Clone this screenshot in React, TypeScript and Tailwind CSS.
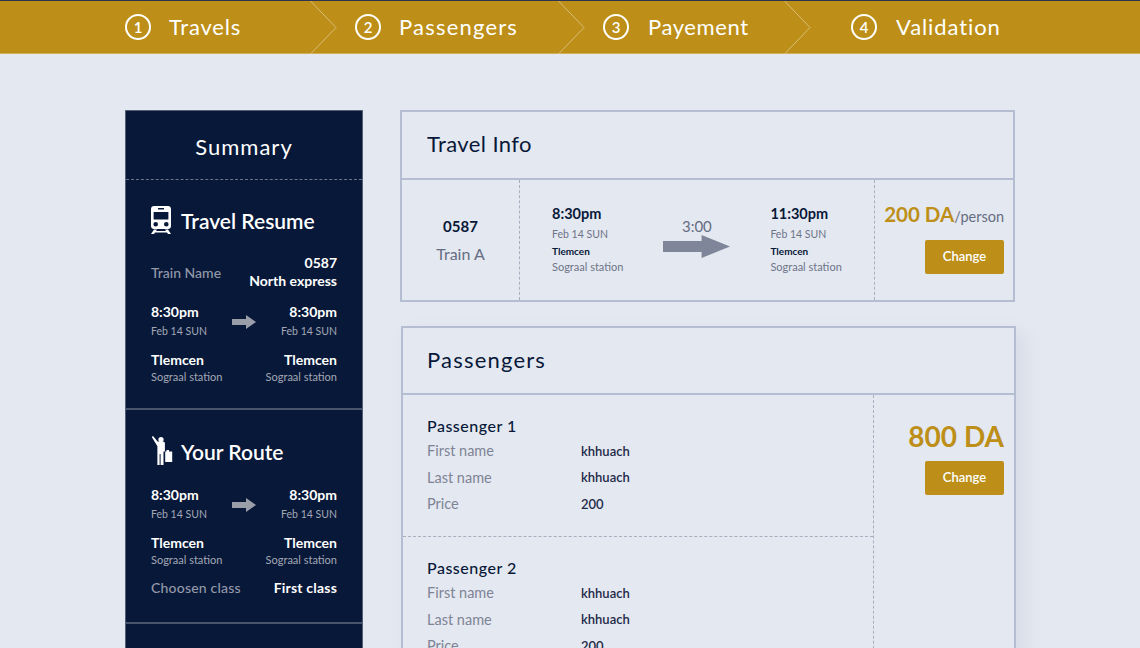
const heading = "font-['Lato','Noto_Sans',sans-serif]";

function Chevron() {
  return (
    <svg width="27" height="53" viewBox="0 0 27 53" className="shrink-0 block" fill="none">
      <path d="M0.5 0L26 26.5L0.5 53" stroke="#D9BE78" strokeWidth="1" />
    </svg>
  );
}

function Step({ n, label, width, tracking }: { n: number; label: string; width: string; tracking: string }) {
  return (
    <div className={`flex items-center ${width}`}>
      <div className="w-[26px] h-[26px] rounded-full border-2 border-white flex items-center justify-center text-[15px] font-semibold text-white shrink-0">
        {n}
      </div>
      <span className={`text-[22px] text-white leading-none ${tracking}`}>{label}</span>
    </div>
  );
}

function SmallArrow() {
  return (
    <svg width="24" height="14" viewBox="0 0 24 14" className="block" fill="#9A9EA9">
      <path d="M0 4H14V0L24 7L14 14V10H0Z" />
    </svg>
  );
}

function BigArrow() {
  return (
    <svg width="67" height="23" viewBox="0 0 66 23" preserveAspectRatio="none" className="block" fill="#7F8699">
      <path d="M0 6H38V0L66 11.5L38 23V17H0Z" />
    </svg>
  );
}

function TrainIcon() {
  return (
    <svg width="20" height="28" viewBox="0 0 20 28" className="block shrink-0" fill="white">
      <path
        fillRule="evenodd"
        d="M3 0H17C18.7 0 20 1.3 20 3V20C20 21.7 18.7 23 17 23H3C1.3 23 0 21.7 0 20V3C0 1.3 1.3 0 3 0ZM7 2V3.6H13V2ZM2.6 6V13.4H17.4V6ZM4.7 16A2.3 2.3 0 1 0 4.7 20.6A2.3 2.3 0 1 0 4.7 16ZM15.3 16A2.3 2.3 0 1 0 15.3 20.6A2.3 2.3 0 1 0 15.3 16Z"
      />
      <path d="M3 23.5H6L5 25H15L14 23.5H17L20 28H17L16 26.5H4L3 28H0Z" />
    </svg>
  );
}

function PersonIcon() {
  return (
    <svg width="22" height="30" viewBox="0 0 22 30" className="block shrink-0" fill="white">
      <circle cx="10" cy="3.6" r="2.6" />
      <path d="M0.8 1L2 0L6.6 5.6H12C13.2 5.6 13.9 6.4 13.9 7.6V15.4H12.5V29H9.6V18H8.6V29H6.4V10.2Z" />
      <path d="M14.2 15.5H15.5V14H18V15.5H21.2V26H14.2Z" />
    </svg>
  );
}

function DualRow({ left, right, leftClass, rightClass, h }: { left: string; right: string; leftClass: string; rightClass: string; h: string }) {
  return (
    <div className={`flex justify-between items-center ${h}`}>
      <span className={leftClass}>{left}</span>
      <span className={rightClass}>{right}</span>
    </div>
  );
}

const boldW = "text-[14px] font-bold text-white leading-none";
const dateG = "text-[10.5px] text-[#A3A8B5] leading-none";
const smallG = "text-[11px] text-[#A3A8B5] leading-none";

function RouteBlock() {
  return (
    <div>
      <div className="relative">
        <DualRow left="8:30pm" right="8:30pm" leftClass={boldW} rightClass={boldW} h="h-[20px]" />
        <DualRow left="Feb 14 SUN" right="Feb 14 SUN" leftClass={dateG} rightClass={dateG} h="h-[18px]" />
        <div className="absolute left-[81px] top-[13px]">
          <SmallArrow />
        </div>
      </div>
      <div className="mt-[11px]">
        <DualRow left="Tlemcen" right="Tlemcen" leftClass={boldW} rightClass={boldW} h="h-[17px]" />
        <DualRow left="Sograal station" right="Sograal station" leftClass={smallG} rightClass={smallG} h="h-[17px]" />
      </div>
    </div>
  );
}

function Sidebar() {
  return (
    <aside className="w-[238px] shrink-0 bg-[#081839] border border-[#565F78] h-[560px]">
      <div className={`h-[69px] flex items-center justify-center pt-[2px] text-[22px] text-white tracking-[1px] ${heading} border-b border-dashed border-[#6D7488]`}>
        Summary
      </div>
      <div className="h-[230px] pl-[25px] pr-[25px] pt-[26px] border-b-2 border-[#4A536C]">
        <div className="flex items-center gap-[10px] h-[28px]">
          <TrainIcon />
          <span className="text-[21px] font-semibold text-white leading-none">Travel Resume</span>
        </div>
        <div className="mt-[20px] flex justify-between items-center h-[36px]">
          <span className="text-[14px] text-[#9398A8] font-medium">Train Name</span>
          <div className="text-right text-[14px] font-bold text-white leading-[18px]">
            <div>0587</div>
            <div>North express</div>
          </div>
        </div>
        <div className="mt-[12px]">
          <RouteBlock />
        </div>
      </div>
      <div className="h-[214px] pl-[25px] pr-[25px] pt-[26px] border-b-2 border-[#4A536C]">
        <div className="flex items-center gap-[8px] h-[30px]">
          <PersonIcon />
          <span className="text-[21px] font-semibold text-white leading-none">Your Route</span>
        </div>
        <div className="mt-[19px]">
          <RouteBlock />
        </div>
        <div className="mt-[9px] flex justify-between items-center h-[22px]">
          <span className="text-[14px] text-[#9398A8] font-medium tracking-[0.2px] leading-none">Choosen class</span>
          <span className={`${boldW} tracking-[0.2px]`}>First class</span>
        </div>
      </div>
    </aside>
  );
}

function ChangeButton() {
  return (
    <button className="w-[79px] h-[34px] bg-[#BD8F18] rounded-[2px] text-white text-[13px] font-semibold flex items-center justify-center">
      Change
    </button>
  );
}

function Stop({ time }: { time: string }) {
  return (
    <div>
      <div className="text-[14.5px] font-bold text-[#081839] leading-none h-[20px] flex items-center">{time}</div>
      <div className="text-[10.5px] text-[#6E7488] leading-none h-[16px] flex items-center mt-[2px]">Feb 14 SUN</div>
      <div className="text-[10px] font-bold text-[#081839] leading-none h-[16px] flex items-center mt-[1px]">Tlemcen</div>
      <div className="text-[11px] text-[#6E7488] leading-none h-[15px] flex items-center">Sograal station</div>
    </div>
  );
}

function TravelInfo() {
  return (
    <section className="w-[615px] h-[192px] border-2 border-[#B5BDD3]">
      <div className={`h-[68px] flex items-center pl-[25px] pb-[3px] text-[22px] text-[#081839] tracking-[0.4px] ${heading} border-b-2 border-[#B5BDD3]`}>
        Travel Info
      </div>
      <div className="flex h-[120px]">
        <div className="w-[118px] shrink-0 border-r border-dashed border-[#A9AEBF] flex flex-col items-center">
          <div className="mt-[39px] text-[15px] font-bold text-[#081839] leading-none">0587</div>
          <div className="mt-[12px] text-[16px] text-[#666D83] leading-none">Train A</div>
        </div>
        <div className="w-[355px] shrink-0 border-r border-dashed border-[#A9AEBF] flex pt-[24px] pl-[32px]">
          <Stop time="8:30pm" />
          <div className="ml-[40px] w-[67px] shrink-0 flex flex-col items-center">
            <div className="text-[15px] text-[#666D83] leading-none mt-[15px]">3:00</div>
            <div className="mt-[1px]">
              <BigArrow />
            </div>
          </div>
          <div className="ml-[40px]">
            <Stop time="11:30pm" />
          </div>
        </div>
        <div className="flex-1 flex flex-col items-end pr-[9px] pt-[24px]">
          <div className="flex items-baseline h-[26px] whitespace-nowrap">
            <span className="text-[20.5px] font-bold text-[#BD8F18] leading-none">200 DA</span>
            <span className="text-[14.5px] text-[#666D83] leading-none">/person</span>
          </div>
          <div className="mt-[10px]">
            <ChangeButton />
          </div>
        </div>
      </div>
    </section>
  );
}

function Field({ k, v }: { k: string; v: string }) {
  return (
    <div className="flex items-center h-[26.5px]">
      <span className="w-[154px] shrink-0 text-[14.5px] text-[#7E8496] leading-none">{k}</span>
      <span className="text-[13px] font-semibold text-[#1E2A48] leading-none">{v}</span>
    </div>
  );
}

function Passenger({ n, border }: { n: number; border?: boolean }) {
  return (
    <div className={`h-[142px] pl-[24px] pt-[21px] ${border ? "border-b border-dashed border-[#A9AEBF]" : ""}`}>
      <div className={`text-[16px] text-[#081839] font-medium tracking-[0.5px] leading-none h-[20px] flex items-center ${heading}`}>
        Passenger {n}
      </div>
      <div className="mt-[2px]">
        <Field k="First name" v="khhuach" />
        <Field k="Last name" v="khhuach" />
        <Field k="Price" v="200" />
      </div>
    </div>
  );
}

function Passengers() {
  return (
    <section className="w-[615px] ml-[1px] h-[400px] border-2 border-[#B5BDD3] shadow-[8px_8px_16px_rgba(140,150,180,0.15)] flex flex-col">
      <div className={`h-[67px] shrink-0 flex items-center pl-[24px] pb-[3px] text-[22px] text-[#081839] tracking-[1.2px] ${heading} border-b-2 border-[#B5BDD3]`}>
        Passengers
      </div>
      <div className="flex flex-1">
        <div className="w-[471px] shrink-0 border-r border-dashed border-[#A9AEBF]">
          <Passenger n={1} border />
          <Passenger n={2} />
        </div>
        <div className="flex-1 flex flex-col items-end pr-[10px] pt-[26px]">
          <div className="text-[28px] font-bold text-[#BD8F18] leading-none h-[30px] flex items-center">800 DA</div>
          <div className="mt-[10px]">
            <ChangeButton />
          </div>
        </div>
      </div>
    </section>
  );
}

export default function App() {
  return (
    <div className="h-[648px] overflow-hidden bg-[#E4E8F0] font-['Lato','Noto_Sans',sans-serif]">
      <header className="h-[54px] bg-[#BD8F18] border-t border-[#2C3450] border-b border-b-[#D2AE55] flex pl-[125px]">
        <Step n={1} label="Travels" width="w-[185px] gap-[18px]" tracking="tracking-[0.8px]" />
        <Chevron />
        <Step n={2} label="Passengers" width="w-[203px] ml-[18px] gap-[18px]" tracking="tracking-[1.2px]" />
        <Chevron />
        <Step n={3} label="Payement" width="w-[181px] ml-[18px] gap-[19px]" tracking="tracking-[0.6px]" />
        <Chevron />
        <Step n={4} label="Validation" width="ml-[40px] gap-[19px]" tracking="tracking-[0.9px]" />
      </header>
      <main className="flex pl-[125px] pt-[56px] gap-[37px]">
        <Sidebar />
        <div className="flex flex-col gap-[24px]">
          <TravelInfo />
          <Passengers />
        </div>
      </main>
    </div>
  );
}
